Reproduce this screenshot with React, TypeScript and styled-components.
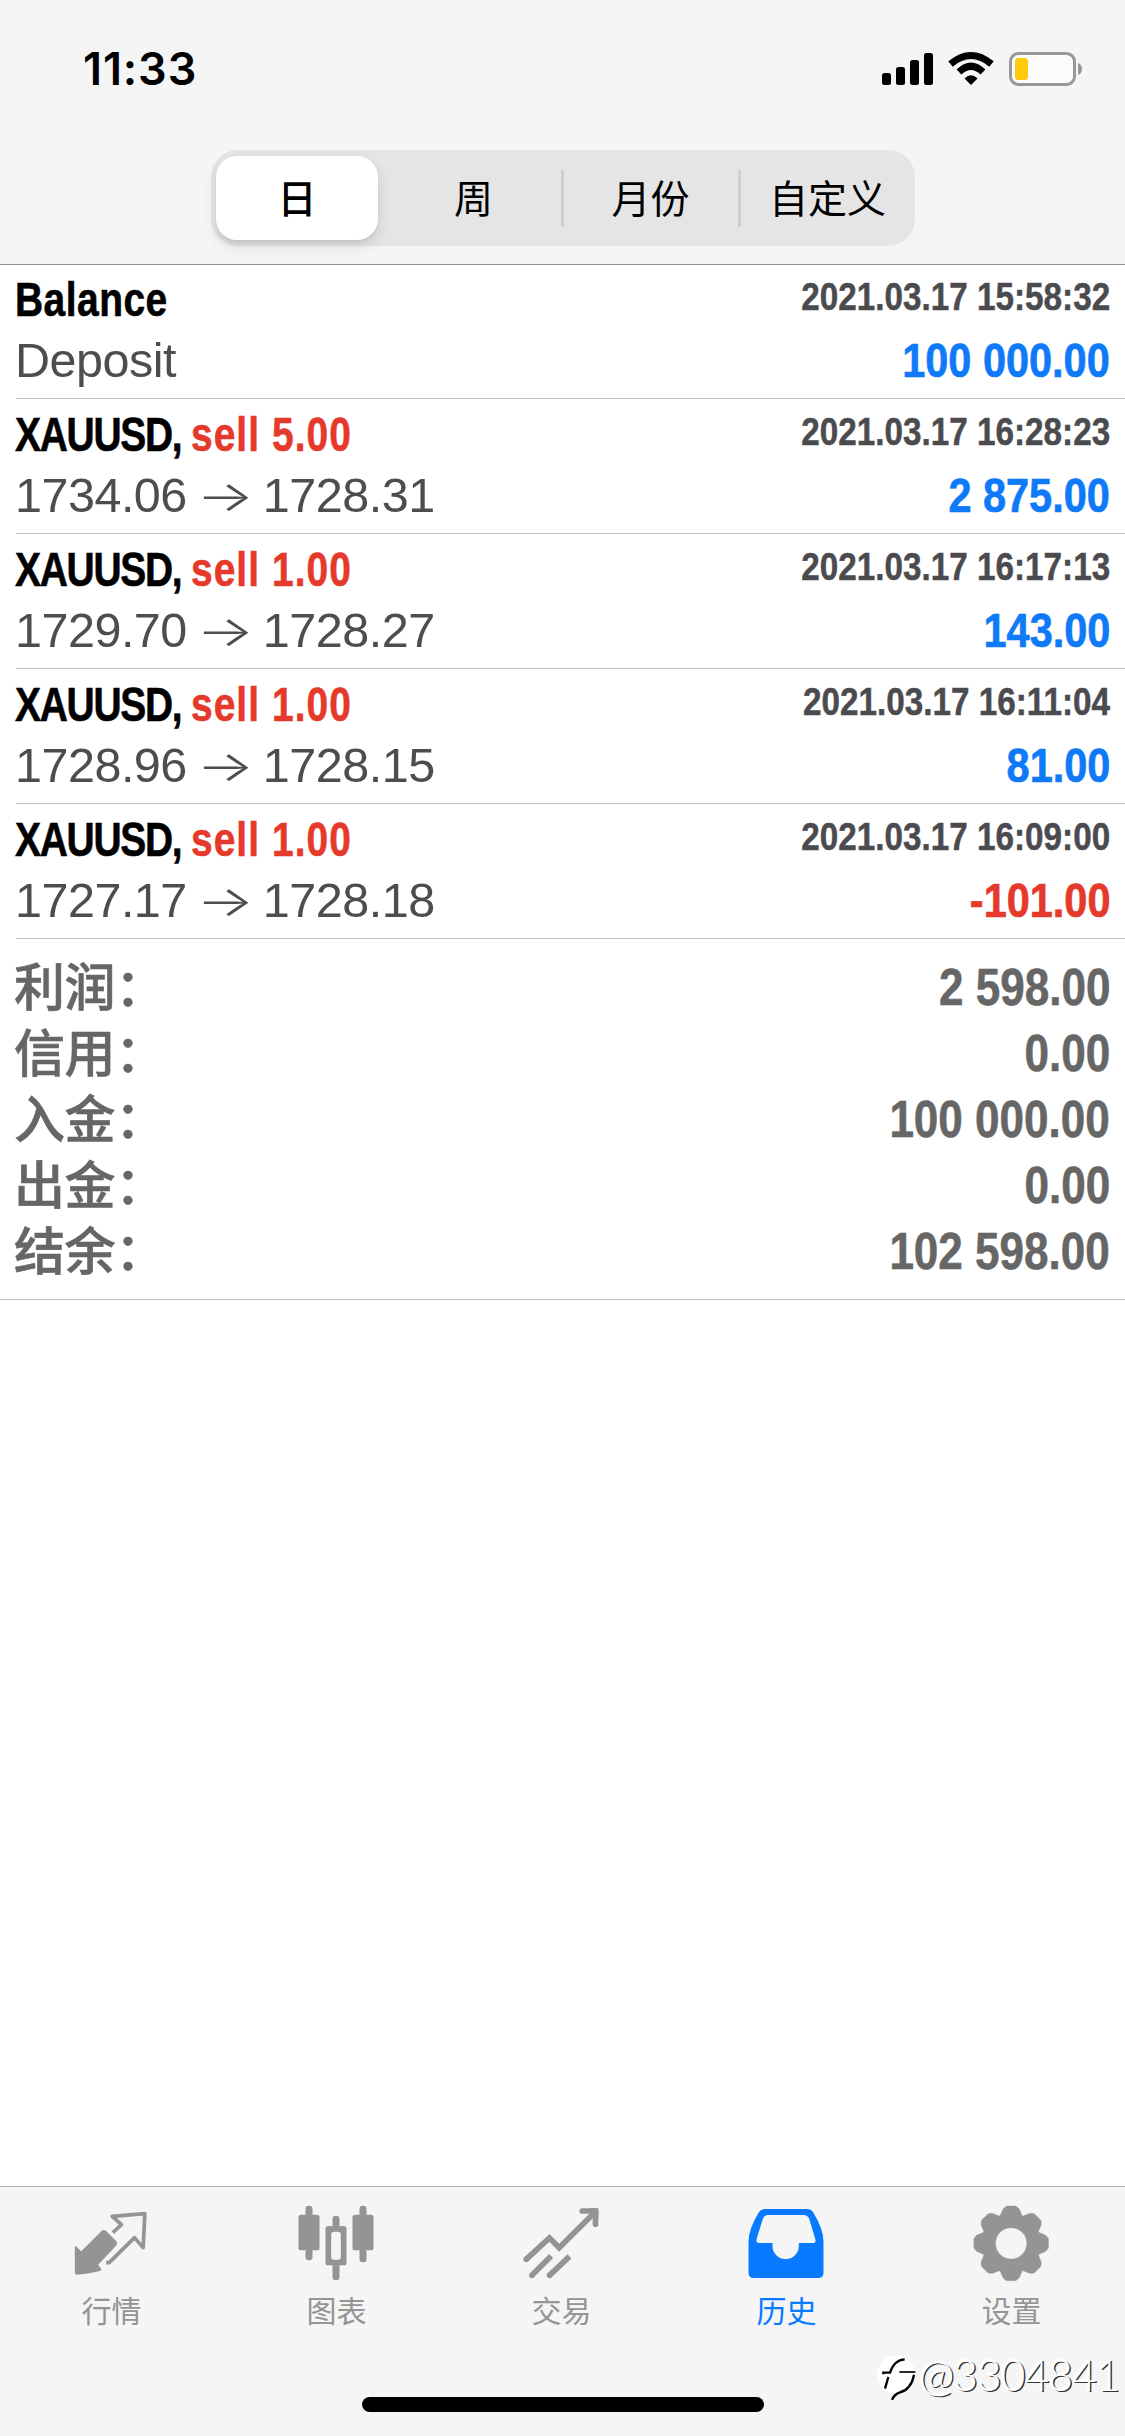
import React from "react";
import styled, { createGlobalStyle } from "styled-components";

const latin = `"Liberation Sans", "Noto Sans CJK SC", sans-serif`;
const cjk = `"Noto Sans CJK SC", sans-serif`;

const GlobalStyle = createGlobalStyle`
  html, body { margin: 0; padding: 0; background: #fff; }
  * { box-sizing: border-box; }
`;

const Screen = styled.div`
  position: relative;
  width: 1125px;
  height: 2436px;
  display: flex;
  flex-direction: column;
  background: #fff;
  overflow: hidden;
  font-family: ${latin};
`;

const Header = styled.header`
  height: 265px;
  flex: none;
  background: #f5f5f5;
  border-bottom: 1px solid #8e8e90;
  display: flex;
  flex-direction: column;
`;

const StatusBar = styled.div`
  height: 150px;
  padding: 42px 42px 0 83px;
  display: flex;
  justify-content: space-between;
  align-items: flex-start;
`;

const Clock = styled.div`
  font: 600 45px/54px Inter, sans-serif;
  letter-spacing: 0.9px;
  color: #000;
`;

const StatusIcons = styled.svg`
  display: block;
  margin-top: 6px;
`;

const Segmented = styled.nav`
  width: 704px;
  height: 96px;
  margin-left: 211px;
  border-radius: 27px;
  background: #e5e5e6;
  display: grid;
  grid-template-columns: 175px 175px 177px 177px;
  padding: 6px 0;
`;

const Segment = styled.button<{ $active?: boolean; $divided?: boolean }>`
  border: 0;
  padding: ${(p) => (p.$divided ? "0 0 4px 2px" : "0 0 4px")};
  margin: ${(p) => (p.$active ? "0 8px 0 5px" : "0")};
  border-radius: ${(p) => (p.$active ? "21px" : "0")};
  background: ${(p) =>
    p.$active
      ? "#fff"
      : p.$divided
        ? "linear-gradient(#cfcfd1, #cfcfd1) left 14px / 3px 57px no-repeat"
        : "transparent"};
  box-shadow: ${(p) => (p.$active ? "0 6px 14px rgba(0, 0, 0, 0.12), 0 3px 3px rgba(0, 0, 0, 0.04)" : "none")};
  font: ${(p) => (p.$active ? 500 : 400)} 39px/80px ${cjk};
  color: #000;
`;

const Deal = styled.article`
  height: 135px;
  margin-left: 16px;
  padding-right: 15px;
  border-bottom: 1px solid #c4c4c6;
  display: flex;
  flex-direction: column;
  &:first-child { height: 134px; }
  &:first-child > :first-child { margin-top: 4px; }
`;

const Line = styled.div<{ $top: number }>`
  margin-top: ${(p) => p.$top}px;
  height: 58px;
  display: flex;
  justify-content: space-between;
`;

const Title = styled.div<{ $tracking: number }>`
  margin-left: -1px;
  font-weight: 700;
  font-size: 49px;
  line-height: 60px;
  letter-spacing: ${(p) => p.$tracking}px;
  color: #000;
  white-space: nowrap;
  transform: scaleX(0.795);
  transform-origin: left;
  -webkit-text-stroke: 0.6px currentColor;
`;

const Side = styled.span`
  color: #e53a2b;
  letter-spacing: 1.3px;
`;

const Stamp = styled.time`
  font-weight: 700;
  font-size: 39px;
  line-height: 56px;
  color: #4b4b4f;
  white-space: nowrap;
  transform: scaleX(0.853);
  transform-origin: right;
  -webkit-text-stroke: 0.5px currentColor;
`;

const Detail = styled.div`
  display: flex;
  margin-left: -1px;
  font-size: 48.5px;
  line-height: 57px;
  letter-spacing: -0.5px;
  color: #4d4d50;
  white-space: pre;
`;

const Arrow = styled.span`
  font: 300 42px/57px Inter, sans-serif;
  width: 76px;
  text-align: center;
  transform: scaleX(1.45);
`;

const Amount = styled.div<{ $loss?: boolean }>`
  font-weight: 700;
  font-size: 48.5px;
  line-height: 57px;
  white-space: nowrap;
  color: ${(p) => (p.$loss ? "#e53a2b" : "#0f7af8")};
  transform: scaleX(0.855);
  transform-origin: right;
  -webkit-text-stroke: 0.7px currentColor;
`;

const Summary = styled.section`
  height: 361px;
  padding: 15px 15px 0 16px;
  border-bottom: 1px solid #c4c4c6;
`;

const SummaryRow = styled.div`
  height: 66px;
  display: flex;
  justify-content: space-between;
  align-items: flex-start;
  color: #666;
`;

const SummaryLabel = styled.span`
  margin: -3px 0 0 -2px;
  font: 500 51px/66px ${cjk};
  letter-spacing: -0.4px;
  -webkit-text-stroke: 0.6px currentColor;
`;

const SummaryValue = styled.span`
  font-weight: 700;
  font-size: 51.5px;
  line-height: 66px;
  transform: scaleX(0.855);
  transform-origin: right;
  -webkit-text-stroke: 0.6px currentColor;
`;

const TabBar = styled.footer`
  margin-top: auto;
  height: 250px;
  flex: none;
  background: #f5f5f5;
  border-top: 1px solid #acacae;
  display: flex;
  flex-direction: column;
  align-items: center;
`;

const Tabs = styled.div`
  width: 100%;
  height: 210px;
  display: grid;
  grid-template-columns: repeat(5, 1fr);
`;

const Tab = styled.div<{ $active?: boolean }>`
  padding: 16px 1px 0 0;
  display: flex;
  flex-direction: column;
  align-items: center;
  color: ${(p) => (p.$active ? "#087aff" : "#949494")};
  font: 400 30px/44px ${cjk};
`;

const TabIcon = styled.svg`
  display: block;
  width: 80px;
  height: 80px;
  margin-bottom: 4px;
  fill: currentColor;
`;

const TabLabel = styled.span`
  margin-right: 1px;
`;

const HomeIndicator = styled.div`
  width: 402px;
  height: 15px;
  border-radius: 8px;
  background: #000;
`;

const Watermark = styled.div`
  position: absolute;
  left: 876px;
  top: 2350px;
  display: flex;
  color: #fff;
  font: 300 42.5px/50px Lato, sans-serif;
  letter-spacing: -0.9px;
  text-shadow: 1.5px 1px 0.5px #333, -1px -1px 1px #fff;
  white-space: nowrap;
`;

const deals = [
  { name: "Balance", time: "2021.03.17 15:58:32", from: "Deposit", amount: "100 000.00" },
  { name: "XAUUSD,", side: "sell 5.00", time: "2021.03.17 16:28:23", from: "1734.06", to: "1728.31", amount: "2 875.00" },
  { name: "XAUUSD,", side: "sell 1.00", time: "2021.03.17 16:17:13", from: "1729.70", to: "1728.27", amount: "143.00" },
  { name: "XAUUSD,", side: "sell 1.00", time: "2021.03.17 16:11:04", from: "1728.96", to: "1728.15", amount: "81.00" },
  { name: "XAUUSD,", side: "sell 1.00", time: "2021.03.17 16:09:00", from: "1727.17", to: "1728.18", amount: "-101.00" },
];

const totals = [
  ["利润：", "2 598.00"],
  ["信用：", "0.00"],
  ["入金：", "100 000.00"],
  ["出金：", "0.00"],
  ["结余：", "102 598.00"],
];

const toothOutline = [
  [-34, -81],
  [-24, -104],
  [-14, -112],
  [14, -112],
  [24, -104],
  [34, -81],
];

const gearPoints = Array.from({ length: 8 }, (_, k) => {
  const a = (k * Math.PI) / 4;
  return toothOutline.map(([x, y]) => {
    const px = 575 + x * Math.cos(a) - y * Math.sin(a);
    const py = 220 + x * Math.sin(a) + y * Math.cos(a);
    return `${px.toFixed(1)} ${py.toFixed(1)}`;
  });
}).flat();

const gearPath = `M${gearPoints.join("L")}Z M622 220a47 47 0 1 0 -94 0a47 47 0 1 0 94 0Z`;

function QuotesIcon() {
  return (
    <TabIcon viewBox="217.5 99 240 240">
      <path d="M306 183Q313 177 320 183L349 212Q356 220 349 228L296 284L305 296Q307 301 301 303Q268 312 236 314Q226 316 226 306V231Q227 226 231 230L245 244Z" />
      <path d="M340 188L366 164L338 139L436 131L431 233L405 203L329 278H320" fill="none" stroke="currentColor" strokeWidth="11" strokeLinejoin="round" />
    </TabIcon>
  );
}

function ChartIcon() {
  return (
    <TabIcon viewBox="892.5 99 240 240">
      <rect x="918" y="107" width="21" height="164" rx="10" />
      <rect x="897" y="134" width="63" height="107" rx="8" />
      <rect x="1080" y="107" width="21" height="170" rx="10" />
      <rect x="1059" y="134" width="63" height="107" rx="8" />
      <rect x="999" y="137" width="21" height="40" rx="10" />
      <rect x="999" y="275" width="21" height="56" rx="10" />
      <path fillRule="evenodd" d="M986 168H1033Q1041 168 1041 176V278Q1041 286 1033 286H986Q978 286 978 278V176Q978 168 986 168ZM1004 185Q995 185 995 194V260Q995 269 1004 269H1015Q1024 269 1024 260V194Q1024 185 1015 185Z" />
    </TabIcon>
  );
}

function TradeIcon() {
  return (
    <TabIcon viewBox="307.5 99 240 240">
      <g fill="none" stroke="currentColor" strokeWidth="17">
        <path d="M320 268L390 204L419 233L526 127" />
        <path d="M337 316L395 258M390 316L450 259" />
        <path d="M488 123H528V163" strokeLinecap="round" />
      </g>
      <path d="M510 114H530Q537 114 537 121V145Z" />
      <circle cx="320" cy="268" r="8.5" />
      <circle cx="337" cy="316" r="8.5" />
      <circle cx="390" cy="316" r="8.5" />
    </TabIcon>
  );
}

function HistoryIcon() {
  return (
    <TabIcon viewBox="982.5 99 240 240">
      <path
        fillRule="evenodd"
        d="M1037 117H1163Q1174 117 1181 127Q1212 178 1212 215V308Q1212 324 1196 324H1003Q987 324 987 308V215Q987 178 1018 127Q1025 117 1037 117ZM1046 135Q1035 135 1030 146L1012 205Q1008 219 1019 219H1059V228A39.500 39.500 0 0 0 1138 228V219H1180Q1191 219 1187 206L1169 146Q1164 135 1153 135Z"
      />
    </TabIcon>
  );
}

function SettingsIcon() {
  return (
    <TabIcon viewBox="457.5 99 240 240">
      <path fillRule="evenodd" d={gearPath} stroke="currentColor" strokeWidth="1" strokeLinejoin="round" />
    </TabIcon>
  );
}

const tabs = [
  { label: "行情", Icon: QuotesIcon },
  { label: "图表", Icon: ChartIcon },
  { label: "交易", Icon: TradeIcon },
  { label: "历史", Icon: HistoryIcon, active: true },
  { label: "设置", Icon: SettingsIcon },
];

export default function App() {
  return (
    <Screen>
      <GlobalStyle />
      <Header>
        <StatusBar>
          <Clock>11:33</Clock>
          <StatusIcons width="203" height="42" viewBox="880 48 203 42">
            <rect x="882" y="73" width="9" height="12" rx="2.500" />
            <rect x="896" y="67" width="9" height="18" rx="2.500" />
            <rect x="910" y="60" width="9" height="25" rx="2.500" />
            <rect x="924" y="53" width="9" height="32" rx="2.500" />
            <path d="M971 85L964.500 78.500Q971 72 977.500 78.500Z" />
            <path d="M959 72Q971 60.500 983 72" fill="none" stroke="#000" strokeWidth="7" />
            <path d="M950.500 64Q971 47 991.500 64" fill="none" stroke="#000" strokeWidth="7" />
            <rect x="1010.500" y="53.500" width="64" height="31" rx="8" fill="#fbfbfb" stroke="#98989a" strokeWidth="3" />
            <rect x="1015" y="58" width="13" height="22" rx="3.500" fill="#ffcb0a" />
            <path d="M1078 63Q1082 64.500 1082 69T1078 75Z" fill="#98989a" />
          </StatusIcons>
        </StatusBar>
        <Segmented>
          <Segment $active>日</Segment>
          <Segment>周</Segment>
          <Segment $divided>月份</Segment>
          <Segment $divided>自定义</Segment>
        </Segmented>
      </Header>
      <main>
        {deals.map((d) => (
          <Deal key={d.time}>
            <Line $top={5}>
              <Title $tracking={d.side ? -1.6 : 0.6}>
                {d.name} {d.side && <Side>{d.side}</Side>}
              </Title>
              <Stamp>{d.time}</Stamp>
            </Line>
            <Line $top={5}>
              <Detail>
                {d.from}
                {d.to && <Arrow>→</Arrow>}
                {d.to}
              </Detail>
              <Amount $loss={d.amount.startsWith("-")}>{d.amount}</Amount>
            </Line>
          </Deal>
        ))}
        <Summary>
          {totals.map(([label, value]) => (
            <SummaryRow key={label}>
              <SummaryLabel>{label}</SummaryLabel>
              <SummaryValue>{value}</SummaryValue>
            </SummaryRow>
          ))}
        </Summary>
      </main>
      <TabBar>
        <Tabs>
          {tabs.map(({ label, Icon, active }) => (
            <Tab key={label} $active={active}>
              <Icon />
              <TabLabel>{label}</TabLabel>
            </Tab>
          ))}
        </Tabs>
        <HomeIndicator />
      </TabBar>
      <Watermark>
        <svg width="43" height="50" viewBox="18 30 129 150">
          <circle cx="79" cy="104" r="57" fill="#fff" />
          <g fill="none" stroke="#000" strokeWidth="7">
            <path d="M40 103V98H60Q73 59 104 58" />
            <path d="M88 96H136" strokeWidth="5" />
            <path d="M55 111L45 146" />
            <path d="M132 104Q124 148 88 158Q72 164 66 180" />
          </g>
        </svg>
        <span>@3304841</span>
      </Watermark>
    </Screen>
  );
}
